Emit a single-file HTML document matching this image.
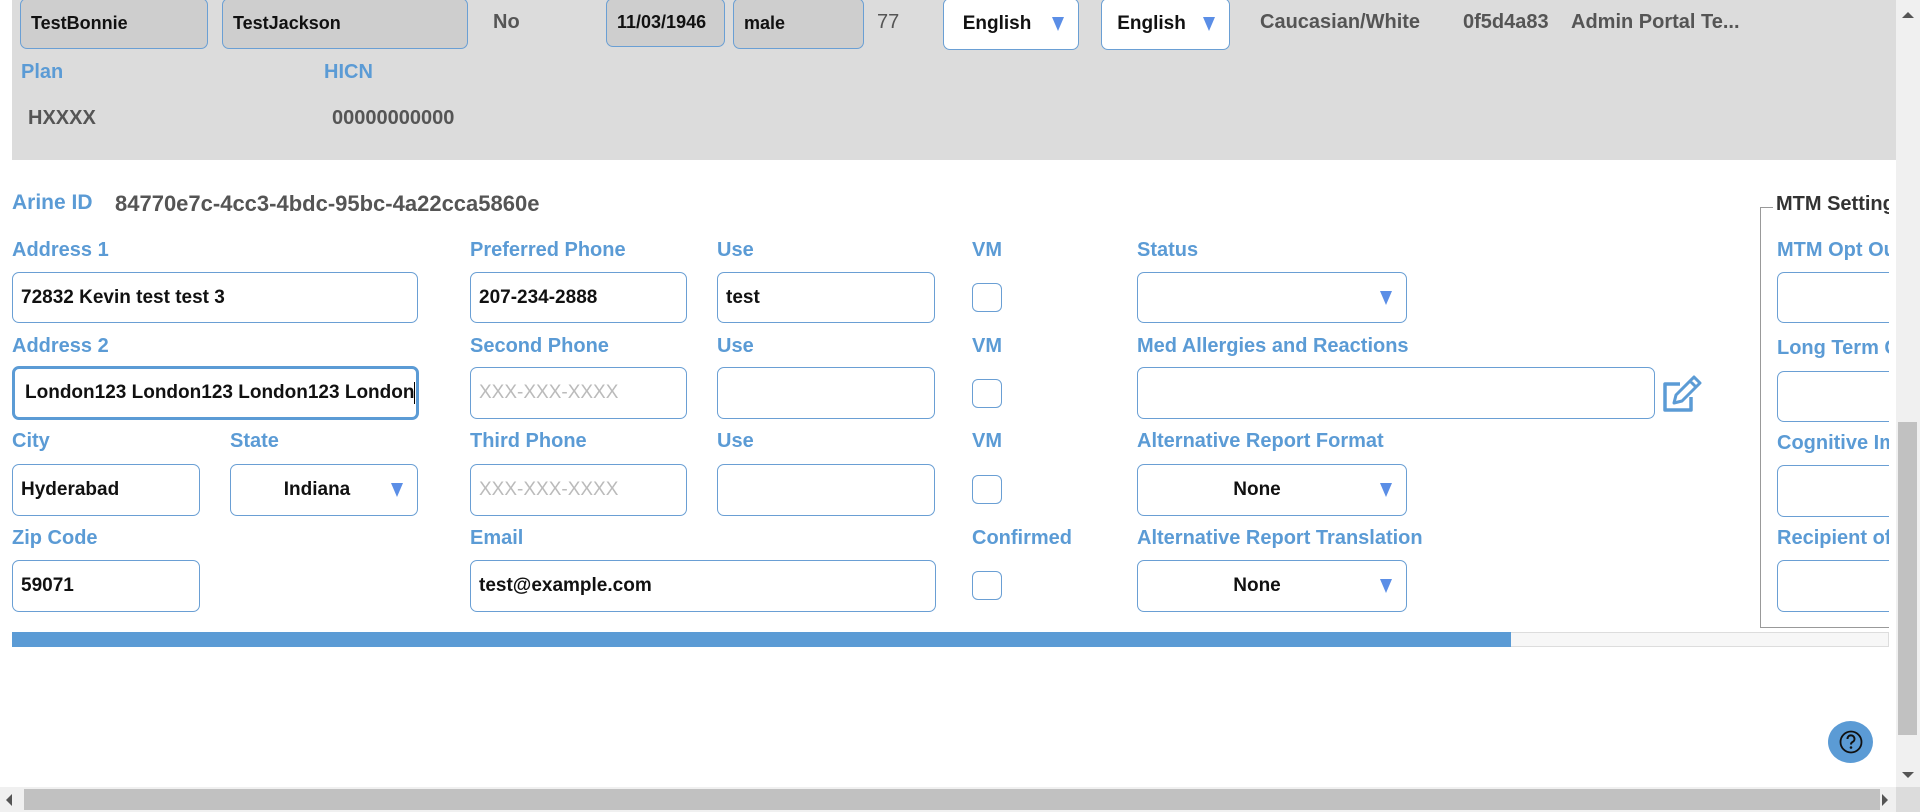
<!DOCTYPE html>
<html><head><meta charset="utf-8"><style>
*{box-sizing:border-box;margin:0;padding:0}
body{width:1920px;height:812px;overflow:hidden;background:#fff;font-family:"Liberation Sans",Arial,sans-serif;position:relative}
.a{position:absolute}
.hdr{left:12px;top:0;width:1884px;height:160px;background:#dcdcdc}
.gi{position:absolute;background:#cecece;border:1px solid #6a9fd4;border-radius:7px;font-weight:bold;font-size:18px;color:#111;padding-left:10px;display:flex;align-items:center}
.gv{position:absolute;font-weight:bold;font-size:20px;color:#555;white-space:nowrap}
.lb{position:absolute;font-weight:bold;font-size:20px;color:#5b9bd5;white-space:nowrap}
.in{position:absolute;background:#fff;border:1px solid #6a9fd4;border-radius:7px;font-weight:bold;font-size:19px;color:#111;padding-left:8px;display:flex;align-items:center;white-space:nowrap;overflow:hidden}
.ph{color:#bbb;font-weight:normal}
.sel{justify-content:center;padding-left:0}
.sel::after{content:"";position:absolute;right:14px;top:50%;margin-top:-7px;border-left:6px solid transparent;border-right:6px solid transparent;border-top:14px solid #5b8ee6}
.cb{position:absolute;width:30px;height:29px;border:1px solid #6a9fd4;border-radius:6px;background:#fff}
</style></head><body>
<div class="a hdr"></div>
<div class="gi" style="left:20px;top:-2px;width:188px;height:51px">TestBonnie</div>
<div class="gi" style="left:222px;top:-2px;width:246px;height:51px">TestJackson</div>
<div class="gv" style="left:493px;top:11px">No</div>
<div class="gi" style="left:606px;top:-2px;width:119px;height:49px">11/03/1946</div>
<div class="gi" style="left:733px;top:-2px;width:131px;height:51px">male</div>
<div class="gv" style="left:877px;top:11px;font-weight:normal">77</div>
<div class="in sel" style="left:943px;top:-2px;width:136px;height:52px;padding-right:28px">English</div>
<div class="in sel" style="left:1101px;top:-2px;width:129px;height:52px;padding-right:28px">English</div>
<div class="gv" style="left:1260px;top:11px">Caucasian/White</div>
<div class="gv" style="left:1463px;top:11px">0f5d4a83</div>
<div class="gv" style="left:1571px;top:11px">Admin Portal Te...</div>
<div class="lb" style="left:21px;top:61px">Plan</div>
<div class="lb" style="left:324px;top:61px">HICN</div>
<div class="gv" style="left:28px;top:107px">HXXXX</div>
<div class="gv" style="left:332px;top:107px">00000000000</div>

<div class="lb" style="left:12px;top:191px;font-size:21px">Arine ID</div>
<div class="gv" style="left:115px;top:191px;font-size:22px">84770e7c-4cc3-4bdc-95bc-4a22cca5860e</div>

<div class="lb" style="left:12px;top:239px">Address 1</div>
<div class="in" style="left:12px;top:272px;width:406px;height:51px">72832 Kevin test test 3</div>
<div class="lb" style="left:12px;top:335px">Address 2</div>
<div class="in" style="left:12px;top:366px;width:407px;height:54px;border:3px solid #5b9bd5;padding-left:10px">London123 London123 London123 London<span style="display:inline-block;width:1px;height:22px;background:#000"></span></div>
<div class="lb" style="left:12px;top:430px">City</div>
<div class="in" style="left:12px;top:464px;width:188px;height:52px">Hyderabad</div>
<div class="lb" style="left:230px;top:430px">State</div>
<div class="in sel" style="left:230px;top:464px;width:188px;height:52px;padding-right:14px">Indiana</div>
<div class="lb" style="left:12px;top:527px">Zip Code</div>
<div class="in" style="left:12px;top:560px;width:188px;height:52px">59071</div>

<div class="lb" style="left:470px;top:239px">Preferred Phone</div>
<div class="in" style="left:470px;top:272px;width:217px;height:51px">207-234-2888</div>
<div class="lb" style="left:470px;top:335px">Second Phone</div>
<div class="in" style="left:470px;top:367px;width:217px;height:52px"><span class="ph">XXX-XXX-XXXX</span></div>
<div class="lb" style="left:470px;top:430px">Third Phone</div>
<div class="in" style="left:470px;top:464px;width:217px;height:52px"><span class="ph">XXX-XXX-XXXX</span></div>
<div class="lb" style="left:470px;top:527px">Email</div>
<div class="in" style="left:470px;top:560px;width:466px;height:52px">test@example.com</div>

<div class="lb" style="left:717px;top:239px">Use</div>
<div class="in" style="left:717px;top:272px;width:218px;height:51px">test</div>
<div class="lb" style="left:717px;top:335px">Use</div>
<div class="in" style="left:717px;top:367px;width:218px;height:52px"></div>
<div class="lb" style="left:717px;top:430px">Use</div>
<div class="in" style="left:717px;top:464px;width:218px;height:52px"></div>

<div class="lb" style="left:972px;top:239px">VM</div>
<div class="cb" style="left:972px;top:283px"></div>
<div class="lb" style="left:972px;top:335px">VM</div>
<div class="cb" style="left:972px;top:379px"></div>
<div class="lb" style="left:972px;top:430px">VM</div>
<div class="cb" style="left:972px;top:475px"></div>
<div class="lb" style="left:972px;top:527px">Confirmed</div>
<div class="cb" style="left:972px;top:571px"></div>

<div class="lb" style="left:1137px;top:239px">Status</div>
<div class="in sel" style="left:1137px;top:272px;width:270px;height:51px"></div>
<div class="lb" style="left:1137px;top:335px">Med Allergies and Reactions</div>
<div class="in" style="left:1137px;top:367px;width:518px;height:52px"></div>
<svg class="a" style="left:1660px;top:372px" width="46" height="42" viewBox="0 0 46 42"><path d="M20 12H5v26h26V25" fill="none" stroke="#5b9bd5" stroke-width="3.5" stroke-linejoin="round"/><path d="M14 31l2-8 18-18 6 6-18 18z M30 9l6 6" fill="none" stroke="#5b9bd5" stroke-width="3" stroke-linejoin="round"/></svg>
<div class="lb" style="left:1137px;top:430px">Alternative Report Format</div>
<div class="in sel" style="left:1137px;top:464px;width:270px;height:52px;padding-right:30px">None</div>
<div class="lb" style="left:1137px;top:527px">Alternative Report Translation</div>
<div class="in sel" style="left:1137px;top:560px;width:270px;height:52px;padding-right:30px">None</div>

<div class="a" style="left:0;top:0;width:1889px;height:812px;overflow:hidden;pointer-events:none">
<div class="a" style="left:1760px;top:207px;width:200px;height:421px;border:1px solid #999"></div>
<div class="a" style="left:1773px;top:193px;background:#fff;padding:0 3px;font-weight:bold;font-size:20px;color:#333;white-space:nowrap">MTM Settings</div>
<div class="lb" style="left:1777px;top:239px">MTM Opt Out</div>
<div class="in" style="left:1777px;top:272px;width:200px;height:51px"></div>
<div class="lb" style="left:1777px;top:337px">Long Term Care</div>
<div class="in" style="left:1777px;top:371px;width:200px;height:51px"></div>
<div class="lb" style="left:1777px;top:432px">Cognitive Impairment</div>
<div class="in" style="left:1777px;top:465px;width:200px;height:52px"></div>
<div class="lb" style="left:1777px;top:527px">Recipient of</div>
<div class="in" style="left:1777px;top:560px;width:200px;height:52px"></div>
</div>

<div class="a" style="left:12px;top:632px;width:1877px;height:15px;background:#f7f7f7;border:1px solid #ddd"></div>
<div class="a" style="left:12px;top:632px;width:1499px;height:15px;background:#5b9bd5"></div>

<div class="a" style="left:1828px;top:721px;width:45px;height:42px;border-radius:50%;background:#5b9bd5"></div>
<svg class="a" style="left:1838px;top:729px" width="26" height="26" viewBox="0 0 26 26"><circle cx="13" cy="13" r="10.5" fill="none" stroke="#111" stroke-width="1.8"/><path d="M9.5 10a3.5 3.5 0 1 1 5 3c-1.2.6-1.5 1.2-1.5 2.5" fill="none" stroke="#111" stroke-width="2"/><circle cx="13" cy="18.5" r="1.3" fill="#111"/></svg>

<div class="a" style="left:1896px;top:0;width:24px;height:787px;background:#f0f0f0"></div>
<div class="a" style="left:1898px;top:422px;width:19px;height:313px;background:#c1c1c1"></div>
<div class="a" style="left:1902px;top:12px;border-left:6px solid transparent;border-right:6px solid transparent;border-bottom:6px solid #555"></div>
<div class="a" style="left:1902px;top:772px;border-left:6px solid transparent;border-right:6px solid transparent;border-top:6px solid #555"></div>
<div class="a" style="left:0;top:787px;width:1896px;height:25px;background:#f0f0f0"></div>
<div class="a" style="left:24px;top:789px;width:1856px;height:21px;background:#c1c1c1"></div>
<div class="a" style="left:6px;top:794px;border-top:6px solid transparent;border-bottom:6px solid transparent;border-right:6px solid #555"></div>
<div class="a" style="left:1882px;top:794px;border-top:6px solid transparent;border-bottom:6px solid transparent;border-left:6px solid #555"></div>
<div class="a" style="left:1896px;top:787px;width:24px;height:25px;background:#dcdcdc"></div>
</body></html>
